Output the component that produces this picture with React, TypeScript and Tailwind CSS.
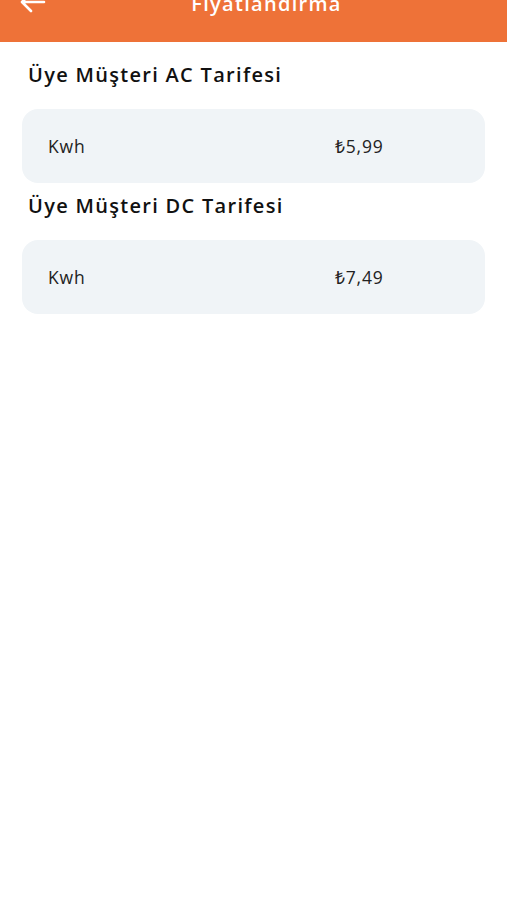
const font = { fontFamily: '"Open Sans", "Noto Sans", sans-serif' };

function TariffCard({ unit, price }: { unit: string; price: string }) {
  return (
    <div className="mx-[22px] h-[74px] rounded-2xl bg-[#f0f4f7] flex items-center text-[17.5px] tracking-[0.8px] text-[#222]">
      <span className="w-[313px] pl-[26px]">{unit}</span>
      <span>{price}</span>
    </div>
  );
}

export default function App() {
  return (
    <div className="min-h-[900px] bg-white" style={font}>
      <div className="h-[42px] overflow-hidden bg-[#ee7238]">
        <div className="relative -mt-[10px] h-[28px] flex items-center justify-center pl-[26px]">
          <svg
            className="absolute left-[20px] top-[1px]"
            width="26"
            height="22"
            viewBox="0 0 26 22"
            fill="none"
            stroke="white"
            strokeWidth="2.6"
            strokeLinecap="round"
            strokeLinejoin="round"
          >
            <path d="M24 11H3M11 2L2 11l9 9" />
          </svg>
          <span className="text-white text-[20px] font-semibold tracking-[1.3px]">Fiyatlandırma</span>
        </div>
      </div>

      <h2 className="mt-[19px] mb-[20px] pl-[28px] h-[28px] flex items-center text-[20px] font-semibold tracking-[1.3px] text-[#111]">
        Üye Müşteri AC Tarifesi
      </h2>
      <TariffCard unit="Kwh" price="₺5,99" />

      <h2 className="mt-[9px] mb-[20px] pl-[28px] h-[28px] flex items-center text-[20px] font-semibold tracking-[1.3px] text-[#111]">
        Üye Müşteri DC Tarifesi
      </h2>
      <TariffCard unit="Kwh" price="₺7,49" />
    </div>
  );
}
